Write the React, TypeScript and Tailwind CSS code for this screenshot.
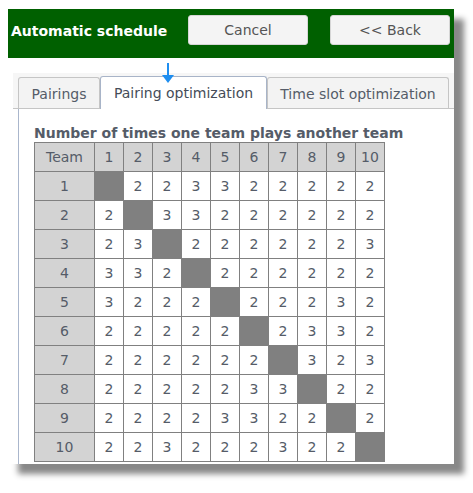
import React from "react";

const data: (number | null)[][] = [
  [null, 2, 2, 3, 3, 2, 2, 2, 2, 2],
  [2, null, 3, 3, 2, 2, 2, 2, 2, 2],
  [2, 3, null, 2, 2, 2, 2, 2, 2, 3],
  [3, 3, 2, null, 2, 2, 2, 2, 2, 2],
  [3, 2, 2, 2, null, 2, 2, 2, 3, 2],
  [2, 2, 2, 2, 2, null, 2, 3, 3, 2],
  [2, 2, 2, 2, 2, 2, null, 3, 2, 3],
  [2, 2, 2, 2, 2, 3, 3, null, 2, 2],
  [2, 2, 2, 2, 3, 3, 2, 2, null, 2],
  [2, 2, 3, 2, 2, 2, 3, 2, 2, null],
];

const font = { fontFamily: '"DejaVu Sans", Verdana, sans-serif' };

export default function App() {
  return (
    <div className="w-[473px] h-[493px] bg-white pt-[9px] pl-[8px]" style={font}>
      <div className="w-[446px] h-[455px] bg-white shadow-[10px_10px_6px_#888888] flex flex-col">
        <div className="h-[49px] bg-[#006000] flex items-start pt-[6px]">
          <div className="w-[180px] pl-[3px] pt-[6px] text-[14px] font-bold text-white leading-[20px] whitespace-nowrap">
            Automatic schedule
          </div>
          <button className="w-[120px] h-[30px] bg-[#f4f4f4] border border-[#d6d6d6] rounded-[3px] text-[14px] text-[#555555]">
            Cancel
          </button>
          <button className="ml-[22px] w-[120px] h-[30px] bg-[#f4f4f4] border border-[#d6d6d6] rounded-[3px] text-[14px] text-[#555555]">
            &lt;&lt; Back
          </button>
        </div>
        <div className="flex-1 pt-[15px] pl-[5px] relative">
          <div className="absolute left-[154px] top-[5px] flex flex-col items-center z-10">
            <div className="w-[2px] h-[12px] bg-[#1e8ef0]" />
            <div className="w-0 h-0 border-l-[6px] border-r-[6px] border-t-[8px] border-l-transparent border-r-transparent border-t-[#1e8ef0]" />
          </div>
          <div className="bg-[#f6f6f6] h-[36px] flex items-end pl-[5px] border-b border-[#c5c5c5]">
            <div className="h-[31px] w-[82px] bg-[#f3f3f3] border border-[#c5c5c5] border-b-0 rounded-t-[3px] flex items-center justify-center text-[14px] text-[#555c68] pt-[2px]">
              Pairings
            </div>
            <div className="h-[33px] -mb-px w-[167px] bg-white border border-[#a8b4c8] border-b-0 rounded-t-[3px] flex items-center justify-center text-[14px] text-[#454c58] pt-[1px]">
              Pairing optimization
            </div>
            <div className="h-[31px] w-[182px] bg-[#f3f3f3] border border-[#c5c5c5] border-b-0 rounded-t-[3px] flex items-center justify-center text-[14px] text-[#555c68] pt-[2px]">
              Time slot optimization
            </div>
          </div>
          <div className="ml-[5px] border-l border-[#aab6cc] bg-white h-[355px] pl-[15px] pt-[16px]">
            <div className="text-[14px] font-bold text-[#555c68] leading-[17px] whitespace-nowrap">
              Number of times one team plays another team
            </div>
            <table className="border-collapse text-[14px] text-[#555c68]">
              <tbody>
                <tr className="h-[29px]">
                  <td className="w-[60px] border border-[#808080] bg-[#d3d3d3] text-center p-0">Team</td>
                  {Array.from({ length: 10 }, (_, i) => (
                    <td key={i} className="w-[29px] border border-[#808080] bg-[#d3d3d3] text-center p-0">
                      {i + 1}
                    </td>
                  ))}
                </tr>
                {data.map((row, r) => (
                  <tr key={r} className="h-[29px]">
                    <td className="border border-[#808080] bg-[#d3d3d3] text-center p-0">{r + 1}</td>
                    {row.map((v, c) =>
                      v === null ? (
                        <td key={c} className="border border-[#808080] bg-[#808080] p-0" />
                      ) : (
                        <td key={c} className="border border-[#808080] bg-white text-center p-0">
                          {v}
                        </td>
                      )
                    )}
                  </tr>
                ))}
              </tbody>
            </table>
          </div>
        </div>
      </div>
    </div>
  );
}
